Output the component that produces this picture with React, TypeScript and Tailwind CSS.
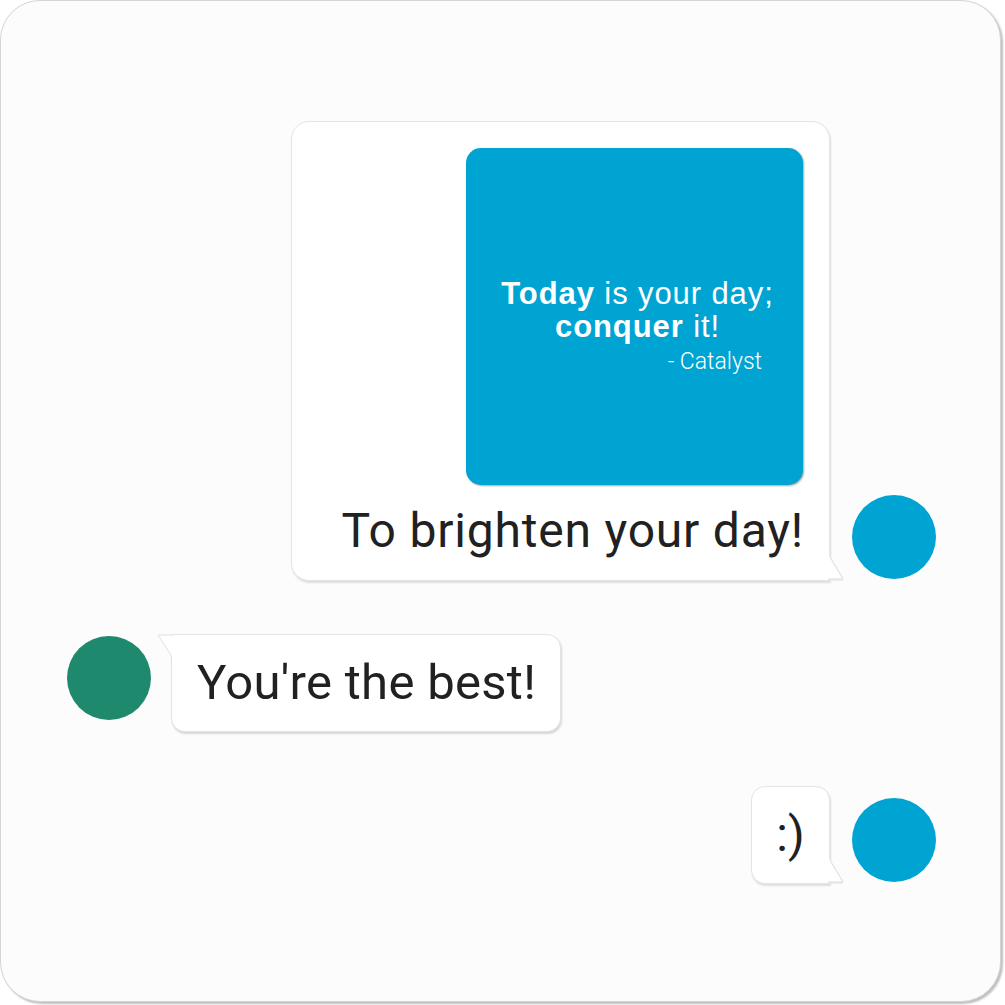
import React from "react";

function TailBR() {
  return (
    <svg
      className="absolute bottom-[-1px] right-[-15px]"
      width="16"
      height="26"
      viewBox="0 0 16 26"
    >
      <polygon points="0,0 2,0 15,24 0,24" fill="#ffffff" />
      <polyline points="2,0 2,2 15,24 0,24" fill="none" stroke="#d9d9d9" strokeWidth="1" />
      <line x1="1" y1="25" x2="15" y2="25" stroke="#e6e6e6" strokeWidth="1.5" />
    </svg>
  );
}

function TailTL() {
  return (
    <svg
      className="absolute top-[-1px] left-[-15px]"
      width="16"
      height="24"
      viewBox="0 0 16 24"
    >
      <polygon points="1,1 16,1 16,22 14,22" fill="#ffffff" />
      <polyline points="16,1 1,1 14,21 14,23" fill="none" stroke="#e0e0e0" strokeWidth="1" />
    </svg>
  );
}

export default function App() {
  return (
    <div
      className="w-[1005px] h-[1005px] bg-white"
      style={{ fontFamily: "Roboto, 'Open Sans', Arial, sans-serif" }}
    >
      <div className="w-[1001px] h-[1002px] rounded-[40px] bg-[#fcfcfc] border border-[#d4d4d4] shadow-[2px_2px_2px_rgba(0,0,0,0.25)] flex flex-col pt-[120px]">
        {/* Row 1 */}
        <div className="flex items-end justify-end pr-[64px] gap-[22px]">
          <div className="relative w-[539px] h-[460px] bg-white border border-[#e4e4e4] rounded-[18px] rounded-br-none shadow-[1px_2px_2px_rgba(0,0,0,0.12)] flex flex-col items-end pt-[26px] pr-[26px]">
            <div className="w-[337px] h-[337px] rounded-[15px] bg-[#00a4d3] shadow-[1px_1px_2px_rgba(0,0,0,0.35)] flex flex-col items-center justify-center text-white pt-[18px]">
              <div
                className="text-[31px] leading-[33px] tracking-[0.9px] text-center pl-[6px]"
                style={{ fontFamily: "'Liberation Sans', Arial, sans-serif" }}
              >
                <span className="font-bold">Today</span> is your day;
                <br />
                <span className="font-bold">conquer</span> it!
              </div>
              <div className="self-end mr-[41px] mt-[6px] text-[23px] leading-[26px] font-light">
                - Catalyst
              </div>
            </div>
            <div className="mt-[18px] text-[48px] leading-[56px] tracking-[0.8px] text-[#212121] mr-[-1px]">
              To brighten your day!
            </div>
            <TailBR />
          </div>
          <div className="w-[84px] h-[84px] rounded-full bg-[#00a4d3] mb-[2px]" />
        </div>

        {/* Row 2 */}
        <div className="flex items-start pl-[66px] gap-[20px] mt-[53px]">
          <div className="w-[84px] h-[84px] rounded-full bg-[#1f896e] mt-[2px]" />
          <div className="relative h-[98px] bg-white border border-[#e4e4e4] rounded-[14px] rounded-tl-none shadow-[1px_2px_2px_rgba(0,0,0,0.15)] flex items-center pl-[25px] pr-[24px]">
            <div className="text-[49px] leading-[56px] tracking-[0.3px] text-[#212121]">You're the best!</div>
            <TailTL />
          </div>
        </div>

        {/* Row 3 */}
        <div className="flex items-end justify-end pr-[64px] gap-[22px] mt-[54px]">
          <div className="relative w-[79px] h-[98px] bg-white border border-[#e4e4e4] rounded-[14px] rounded-br-none shadow-[1px_2px_2px_rgba(0,0,0,0.12)] flex items-center justify-center">
            <div className="text-[48px] leading-[56px] text-[#212121]">:)</div>
            <TailBR />
          </div>
          <div className="w-[84px] h-[84px] rounded-full bg-[#00a4d3] mb-[2px]" />
        </div>
      </div>
    </div>
  );
}
